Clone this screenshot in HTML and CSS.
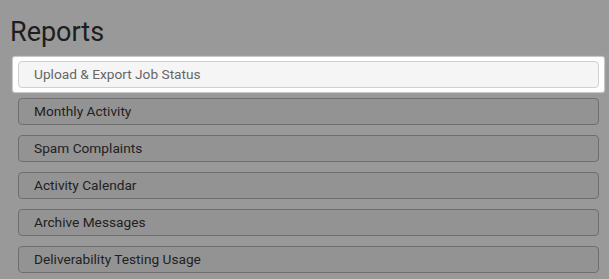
FILE: index.html
```html
<!DOCTYPE html>
<html>

<head>
    <title>Reports</title>
    <meta charset="UTF-8" />
    <link rel="stylesheet" href="styles.css">
</head>

<body>
    <div class="page">
        <h1>Reports</h1>
        <ul class="reports">
            <li class="spotlight">
                <div class="report active">Upload &amp; Export Job Status</div>
            </li>
            <li class="report">Monthly Activity</li>
            <li class="report">Spam Complaints</li>
            <li class="report">Activity Calendar</li>
            <li class="report">Archive Messages</li>
            <li class="report">Deliverability Testing Usage</li>
        </ul>
    </div>
    <div class="overlay"></div>
</body>

</html>
```

FILE: styles.css
```css
body {
    font-family: Roboto, "Liberation Sans", sans-serif;
    margin: 0;
    padding: 0;
    background-color: white;
    color: #383838;
    overflow: hidden;
}

.page {
    padding: 17px 10px 0 10px;
}

h1 {
    margin: 0 0 14px 0;
    font-size: 27px;
    font-weight: 400;
    line-height: 30px;
    color: #333;
}

.reports {
    list-style: none;
    margin: 0 0 0 8px;
    padding: 0;
    display: flex;
    flex-direction: column;
    gap: 10px;
}

.report {
    height: 25px;
    line-height: 25px;
    padding: 0 15px;
    font-size: 13.7px;
    background-color: #f5f5f5;
    border: 1px solid #b8b8b8;
    border-radius: 4px;
}

.overlay {
    position: fixed;
    inset: 0;
    background-color: rgba(0, 0, 0, 0.4);
    z-index: 1;
}

.spotlight {
    position: relative;
    z-index: 2;
    margin: -4px -5px;
    padding: 4px 5px;
    background-color: white;
    border-radius: 2px;
    box-shadow: 0 0 1px 1px rgba(255, 255, 255, 0.5);
}

.report.active {
    color: #666;
    border-color: #cfcfcf;
}
```
